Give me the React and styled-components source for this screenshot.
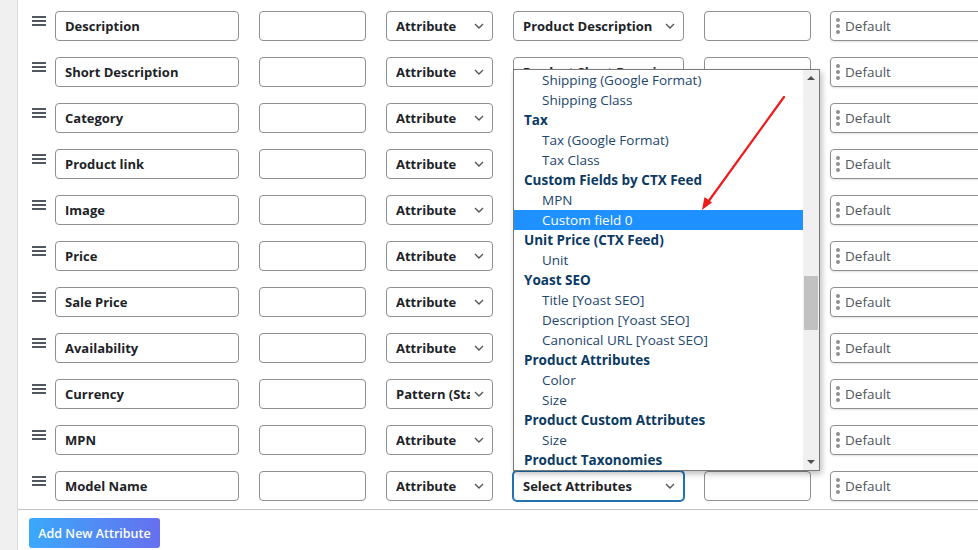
import React from "react";
import styled, { createGlobalStyle } from "styled-components";

const Global = createGlobalStyle`
  html, body { margin: 0; padding: 0; background: #fff; }
  body { font-family: "Open Sans", "Noto Sans", sans-serif; overflow: hidden; }
  * { box-sizing: border-box; }
`;

const Page = styled.div`
  display: flex;
  width: 978px;
  height: 550px;
  overflow: hidden;
  position: relative;
`;

const SideStrip = styled.div`
  width: 18px;
  flex: none;
  background: #f0f0f1;
  border-right: 1px solid #dcdcde;
`;

const Main = styled.div`
  flex: 1;
  display: flex;
  flex-direction: column;
  min-width: 0;
`;

const Rows = styled.div`
  display: flex;
  flex-direction: column;
  gap: 16px;
  padding: 11px 0 0 14px;
  height: 510px;
  border-bottom: 1px solid #c3c4c7;
`;

const Row = styled.div`
  display: flex;
  align-items: center;
  height: 30px;
  white-space: nowrap;
`;

const Handle = styled.div`
  width: 14px;
  flex: none;
  margin-right: 9px;
  align-self: flex-start;
  padding-top: 5px;
  display: flex;
  flex-direction: column;
  gap: 2px;
  span {
    display: block;
    height: 2px;
    background: #50575e;
  }
`;

const Field = styled.div`
  flex: none;
  width: ${(p) => p.$w}px;
  margin-right: ${(p) => p.$mr ?? 20}px;
  height: 30px;
  border: 1px solid ${(p) => (p.$focus ? "#2271b1" : "#8c8f94")};
  box-shadow: ${(p) => (p.$focus ? "0 0 0 1px #2271b1" : "none")};
  border-radius: 4px;
  background: #fff;
  display: flex;
  align-items: center;
  padding: 0 8px 0 9px;
  font-size: 13px;
  font-weight: 700;
  color: #1d2327;
  overflow: hidden;
`;

const SelectText = styled.span`
  flex: 1;
  overflow: hidden;
  white-space: nowrap;
  text-overflow: clip;
`;

const Chevron = () => (
  <svg width="10" height="6" viewBox="0 0 10 6" style={{ flex: "none", marginLeft: 4 }}>
    <path d="M1 1 L5 5 L9 1" fill="none" stroke="#50575e" strokeWidth="1.4" />
  </svg>
);

const DefaultField = styled.div`
  flex: none;
  width: 170px;
  height: 30px;
  border: 1px solid #8c8f94;
  border-radius: 4px;
  box-shadow: 0 1px 2px rgba(0, 0, 0, 0.12);
  display: flex;
  align-items: center;
  padding-left: 5px;
  font-size: 13.5px;
  color: #50575e;
  background: #fff;
`;

const Dots = styled.div`
  display: flex;
  flex-direction: column;
  gap: 2px;
  margin-right: 5px;
  i {
    width: 4px;
    height: 4px;
    border-radius: 50%;
    background: #8c8f94;
  }
`;

const Footer = styled.div`
  padding: 8px 0 0 11px;
`;

const AddButton = styled.button`
  height: 30px;
  width: 131px;
  border: none;
  border-radius: 3px;
  background: linear-gradient(90deg, #3aa9fb 0%, #6670ef 100%);
  color: #fff;
  font-family: "Open Sans", "Noto Sans", sans-serif;
  font-weight: 600;
  font-size: 12.5px;
  padding: 0;
`;

const Dropdown = styled.div`
  position: absolute;
  left: 513px;
  top: 69px;
  width: 307px;
  height: 402px;
  border: 1px solid #7a7a7a;
  background: #fff;
  box-shadow: 2px 3px 6px rgba(0, 0, 0, 0.25);
  display: flex;
  overflow: hidden;
`;

const OptionList = styled.div`
  flex: 1;
  display: flex;
  flex-direction: column;
`;

const Option = styled.div`
  height: 20px;
  line-height: 20px;
  font-size: 13.5px;
  white-space: nowrap;
  padding-left: ${(p) => (p.$group ? 10 : 28)}px;
  font-weight: ${(p) => (p.$group ? 700 : 400)};
  color: ${(p) => (p.$selected ? "#fff" : p.$group ? "#0b3a63" : "#22466d")};
  background: ${(p) => (p.$selected ? "#1e90ff" : "transparent")};
`;

const Scrollbar = styled.div`
  width: 16px;
  flex: none;
  background: #f0f0f0;
  position: relative;
`;

const Thumb = styled.div`
  position: absolute;
  left: 1px;
  right: 1px;
  top: 206px;
  height: 54px;
  background: #c1c1c1;
`;

const ArrowTri = styled.div`
  position: absolute;
  left: 4px;
  width: 0;
  height: 0;
  border-left: 4px solid transparent;
  border-right: 4px solid transparent;
  ${(p) =>
    p.$up
      ? "top: 6px; border-bottom: 4px solid #505050;"
      : "bottom: 6px; border-top: 4px solid #505050;"}
`;

const Annotation = styled.svg`
  position: absolute;
  left: 0;
  top: 0;
  pointer-events: none;
`;

const rows = [
  ["Description", "Attribute", "Product Description"],
  ["Short Description", "Attribute", "Product Short Description"],
  ["Category", "Attribute", ""],
  ["Product link", "Attribute", ""],
  ["Image", "Attribute", ""],
  ["Price", "Attribute", ""],
  ["Sale Price", "Attribute", ""],
  ["Availability", "Attribute", ""],
  ["Currency", "Pattern (Static Value)", ""],
  ["MPN", "Attribute", ""],
  ["Model Name", "Attribute", "Select Attributes"],
];

const options = [
  ["Shipping (Google Format)"],
  ["Shipping Class"],
  ["Tax", "g"],
  ["Tax (Google Format)"],
  ["Tax Class"],
  ["Custom Fields by CTX Feed", "g"],
  ["MPN"],
  ["Custom field 0", "s"],
  ["Unit Price (CTX Feed)", "g"],
  ["Unit"],
  ["Yoast SEO", "g"],
  ["Title [Yoast SEO]"],
  ["Description [Yoast SEO]"],
  ["Canonical URL [Yoast SEO]"],
  ["Product Attributes", "g"],
  ["Color"],
  ["Size"],
  ["Product Custom Attributes", "g"],
  ["Size"],
  ["Product Taxonomies", "g"],
];

export default function App() {
  return (
    <Page>
      <Global />
      <SideStrip />
      <Main>
        <Rows>
          {rows.map(([name, type, attr], i) => (
            <Row key={i}>
              <Handle>
                <span />
                <span />
                <span />
              </Handle>
              <Field $w={184}>{name}</Field>
              <Field $w={107} />
              <Field $w={107}>
                <SelectText>{type}</SelectText>
                <Chevron />
              </Field>
              {attr ? (
                <Field $w={171} $focus={i === rows.length - 1}>
                  <SelectText>{attr}</SelectText>
                  <Chevron />
                </Field>
              ) : (
                <Field $w={171} />
              )}
              <Field $w={107} $mr={19} />
              <DefaultField>
                <Dots>
                  <i />
                  <i />
                  <i />
                </Dots>
                Default
              </DefaultField>
            </Row>
          ))}
        </Rows>
        <Footer>
          <AddButton>Add New Attribute</AddButton>
        </Footer>
      </Main>
      <Dropdown>
        <OptionList>
          {options.map(([label, kind], i) => (
            <Option key={i} $group={kind === "g"} $selected={kind === "s"}>
              {label}
            </Option>
          ))}
        </OptionList>
        <Scrollbar>
          <ArrowTri $up />
          <Thumb />
          <ArrowTri />
        </Scrollbar>
      </Dropdown>
      <Annotation width="978" height="550" viewBox="0 0 978 550">
        <line x1="784" y1="97" x2="708" y2="202" stroke="#ee1c1c" strokeWidth="2.2" strokeLinecap="round" />
        <path d="M702 210 L704.5 197 L712 202.5 Z" fill="#ee1c1c" />
      </Annotation>
    </Page>
  );
}
